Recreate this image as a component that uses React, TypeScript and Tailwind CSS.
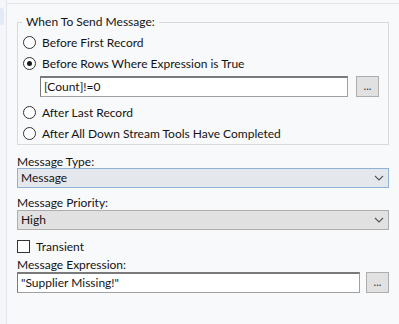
import React from "react";

const font = { fontFamily: 'Lato, "Noto Sans", sans-serif' };

function Radio({ checked = false, label }: { checked?: boolean; label: string }) {
  return (
    <div className="flex h-[21px] items-center">
      <span className="flex h-[13px] w-[13px] items-center justify-center rounded-full border border-[#333333] bg-white">
        {checked && <span className="h-[5px] w-[5px] rounded-full bg-[#1a1a1a]" />}
      </span>
      <span className="ml-[6px] text-[12px] leading-[16px] text-[#141414]">{label}</span>
    </div>
  );
}

function EllipsisButton() {
  return (
    <button className="flex h-[21px] w-[23px] items-center justify-center border border-[#adadad] bg-[#e1e1e1] pb-[3px] text-[11px] leading-none text-[#333]">
      ...
    </button>
  );
}

function Chevron() {
  return (
    <svg width="10" height="6" viewBox="0 0 10 6" className="mr-[4px]">
      <path d="M1 1 L5 5 L9 1" fill="none" stroke="#555" strokeWidth="1.1" />
    </svg>
  );
}

function Select({ value, focused = false }: { value: string; focused?: boolean }) {
  return (
    <div
      className={
        focused
          ? "flex h-[20px] items-center justify-between border border-[#8fb2d6] bg-[#e4e7eb]"
          : "flex h-[20px] items-center justify-between border border-[#adadad] bg-[#e1e1e1]"
      }
    >
      <span className="pl-[3px] text-[12px] leading-[16px] text-[#141414]">{value}</span>
      <Chevron />
    </div>
  );
}

export default function App() {
  return (
    <div className="flex h-[324px] w-[399px] overflow-hidden bg-[#f8f9fb]" style={font}>
      {/* left dock strip */}
      <div className="w-[7px] shrink-0 border-r border-[#e3e6ec] bg-[#f4f6f9] pt-[8px]">
        <div className="h-[17px] w-[4px] rounded-r-[3px] bg-[#e2eaf6]" />
      </div>

      <div className="flex-1">
        <div className="mt-[3px] border-t border-[#e1e4ea]" />
        <div className="pl-[10px] pr-[10px]">
          <fieldset className="mt-[10px] border border-[#d9d9d9] pl-[5px] pr-[5px]">
            <legend className="ml-[-1px] px-[4px] text-[12px] leading-[16px] text-[#141414]">
              When To Send Message:
            </legend>
            <div className="mt-[2px]">
              <Radio label="Before First Record" />
              <Radio checked label="Before Rows Where Expression is True" />
              <div className="mt-[2px] flex items-center gap-[8px] pl-[17px]">
                <div className="flex h-[21px] w-[308px] items-center border border-t-2 border-[#7a7a7a] border-b-[#a0a0a0] border-r-[#a0a0a0] bg-white pl-[3px] text-[12px] text-[#141414]">
                  [Count]!=0
                </div>
                <EllipsisButton />
              </div>
              <div className="mt-[5px]">
                <Radio label="After Last Record" />
                <Radio label="After All Down Stream Tools Have Completed" />
              </div>
            </div>
          </fieldset>

          <div className="mt-[10px] text-[12px] leading-[13px] text-[#141414]">Message Type:</div>
          <Select focused value="Message" />

          <div className="mt-[8px] text-[12px] leading-[14px] text-[#141414]">Message Priority:</div>
          <Select value="High" />

          <div className="mt-[10px] flex h-[13px] items-center">
            <span className="h-[13px] w-[13px] border border-[#333333] bg-white" />
            <span className="ml-[6px] text-[12px] leading-[16px] text-[#141414]">Transient</span>
          </div>

          <div className="mt-[5px] text-[12px] leading-[14px] text-[#141414]">Message Expression:</div>
          <div className="flex items-center gap-[6px]">
            <div className="flex h-[21px] flex-1 items-center border border-t-2 border-[#7a7a7a] border-b-[#a0a0a0] border-r-[#a0a0a0] bg-white pl-[3px] text-[12px] text-[#141414]">
              "Supplier Missing!"
            </div>
            <EllipsisButton />
          </div>
        </div>
      </div>
    </div>
  );
}
